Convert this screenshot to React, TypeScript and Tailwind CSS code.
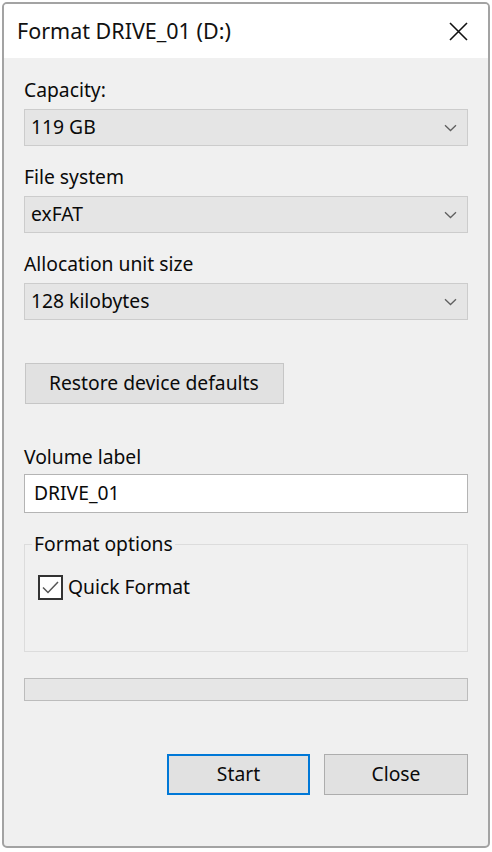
const font = { fontFamily: '"Noto Sans", "Open Sans", sans-serif' };

const Chevron = () => (
  <svg width="13" height="8" viewBox="0 0 13 8" fill="none">
    <path d="M1 1.2 L6.5 6.5 L12 1.2" stroke="#606060" strokeWidth="1.3" />
  </svg>
);

const Field = ({ label, value }: { label: string; value: string }) => (
  <div className="flex flex-col">
    <div className="h-[24px] leading-[24px]">{label}</div>
    <div className="mt-[7px] h-[37px] flex items-center justify-between bg-[#e5e5e5] border border-[#cccccc] pl-[6px] pr-[10px]">
      <span>{value}</span>
      <Chevron />
    </div>
  </div>
);

export default function App() {
  return (
    <div className="w-[492px] h-[852px] bg-white p-[2px]" style={font}>
      <div className="h-[846px] border-2 border-[#a3a3a3] rounded-[5px] bg-[#f0f0f0] flex flex-col overflow-hidden text-[19.3px] text-[#0a0a0a]">
        {/* title bar */}
        <div className="h-[54px] bg-white flex items-center justify-between pl-[13px] pr-[20px] shrink-0">
          <span className="text-[21.5px] text-[#111] pt-[1px]">Format DRIVE_01 (D:)</span>
          <svg width="19" height="19" viewBox="0 0 19 19">
            <path d="M1 1 L18 18 M18 1 L1 18" stroke="#111" strokeWidth="1.6" />
          </svg>
        </div>

        <div className="flex flex-col px-[20px] pt-[20px]">
          <Field label="Capacity:" value="119 GB" />
          <div className="mt-[19px]">
            <Field label="File system" value="exFAT" />
          </div>
          <div className="mt-[19px]">
            <Field label="Allocation unit size" value="128 kilobytes" />
          </div>

          <button className="mt-[43px] ml-[1px] w-[259px] h-[41px] bg-[#e1e1e1] border border-[#c6c6c6] text-left pl-[23px]">
            Restore device defaults
          </button>

          <div className="mt-[41px] h-[24px] leading-[24px]">Volume label</div>
          <div className="mt-[5px] h-[39px] bg-white border border-[#b4b4b4] flex items-center pl-[9px]">
            DRIVE_01
          </div>

          <div className="relative mt-[31px] h-[108px] border border-[#dcdcdc] flex flex-col">
            <span className="absolute -top-[13px] left-[7px] bg-[#f0f0f0] px-[2px] leading-[24px]">
              Format options
            </span>
            <div className="mt-[28px] ml-[13px] flex items-center gap-[5px]">
              <div className="w-[25px] h-[25px] border-2 border-[#333] bg-white flex items-center justify-center">
                <svg width="17" height="13" viewBox="0 0 17 13" fill="none">
                  <path d="M1 6.5 L6 11.5 L16 1" stroke="#555" strokeWidth="1.5" />
                </svg>
              </div>
              <span>Quick Format</span>
            </div>
          </div>

          <div className="mt-[26px] h-[23px] bg-[#e6e6e6] border border-[#bcbcbc]" />

          <div className="mt-[53px] flex justify-end gap-[14px]">
            <button className="w-[143px] h-[41px] bg-[#e1e1e1] border-2 border-[#0078d7]">Start</button>
            <button className="w-[144px] h-[41px] bg-[#e1e1e1] border border-[#adadad]">Close</button>
          </div>
        </div>
      </div>
    </div>
  );
}
